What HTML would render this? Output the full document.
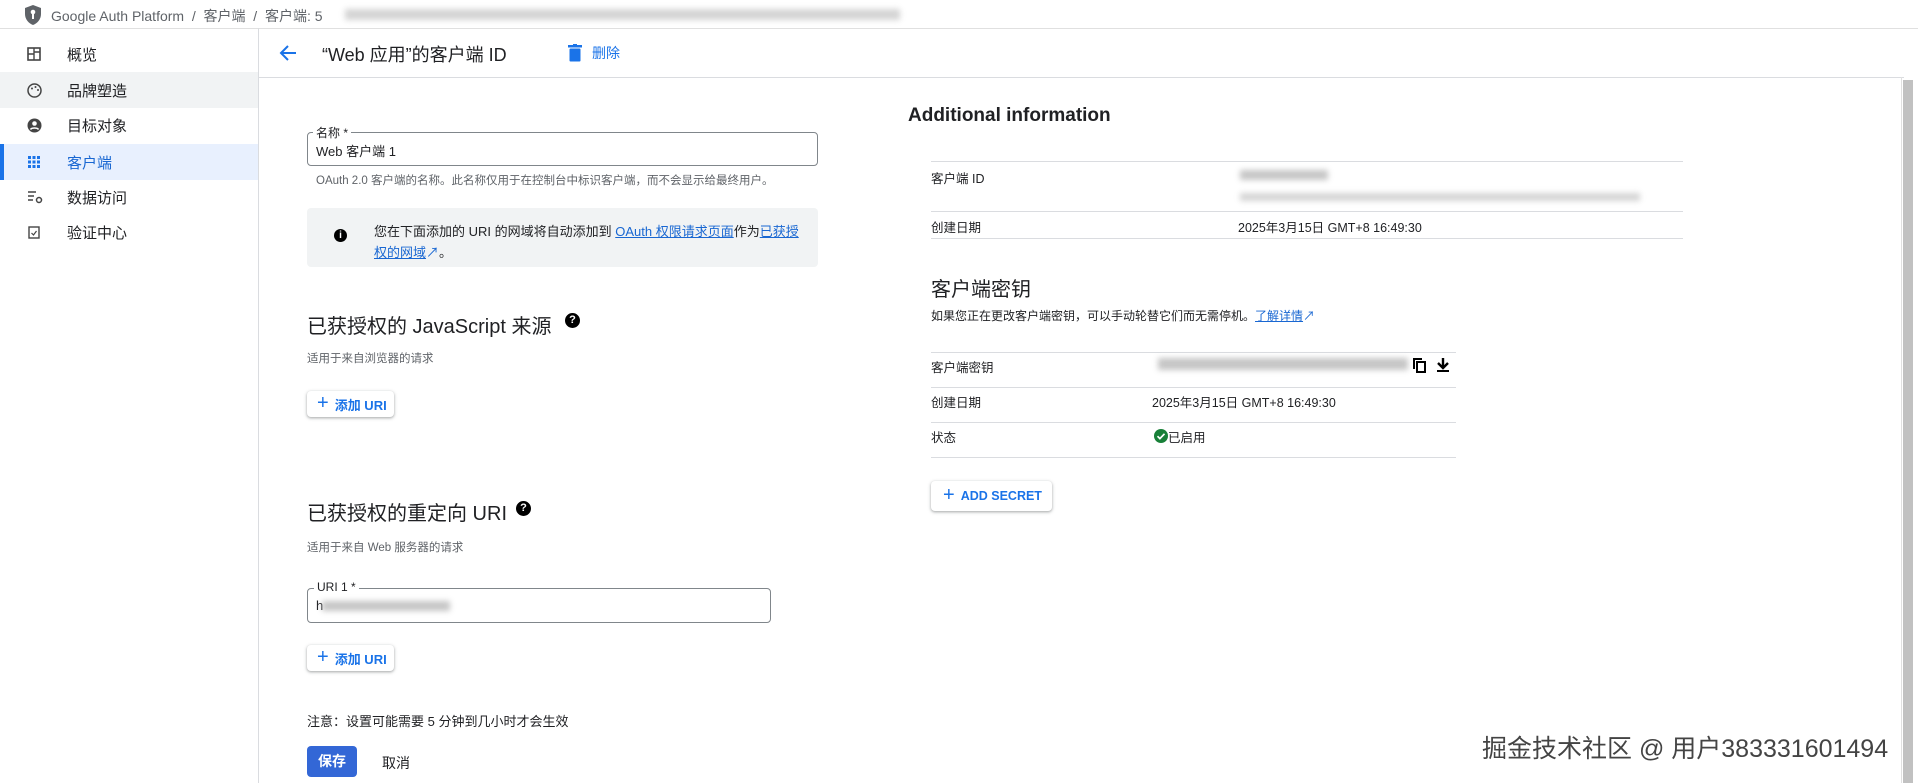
<!DOCTYPE html>
<html><head><meta charset="utf-8">
<style>
*{box-sizing:border-box;margin:0;padding:0}
body{width:1918px;height:783px;overflow:hidden;background:#fff;font-family:"Liberation Sans","Noto Sans CJK SC",sans-serif;color:#202124;position:relative}
.a{position:absolute;white-space:nowrap}
.blur{position:absolute;background:#b8b8b8;filter:blur(3px);opacity:.8}
.line{position:absolute;height:1px;background:#dadce0}
.nav{position:absolute;left:0;width:258px;height:36px;font-size:15px}
.nav span{position:absolute;left:67px;top:8px}
.nav svg{position:absolute;left:27px;top:11px}
.btn{position:absolute;border-radius:4px;box-shadow:0 1px 2px rgba(60,64,67,.3),0 1px 3px 1px rgba(60,64,67,.15);color:#1a73e8;font-size:13px;font-weight:bold;background:#fff;display:flex;align-items:center;padding-left:10px}
.btn b{font-size:20px;font-weight:normal;margin-right:6px;line-height:1;position:relative;top:-1px}
</style></head><body>
<!-- top bar -->
<div class="line" style="left:0;top:28px;width:1918px;background:#e0e0e0"></div>
<svg class="a" style="left:25px;top:5px" width="16" height="20" viewBox="0 0 16 20"><path d="M8 0L0 3v6c0 5 3.4 9.4 8 11 4.6-1.6 8-6 8-11V3z" fill="#5f6368"/><circle cx="8" cy="7" r="2.3" fill="#fff"/><rect x="7" y="8" width="2" height="6" fill="#fff"/></svg>
<div class="a" style="left:51px;top:6px;font-size:14px;color:#5f6368">Google Auth Platform &nbsp;/&nbsp; 客户端 &nbsp;/&nbsp; 客户端: 5</div>
<div class="blur" style="left:345px;top:9px;width:555px;height:11px;opacity:.6"></div>
<!-- sidebar -->
<div class="a" style="left:258px;top:28px;width:1px;height:755px;background:#dadce0"></div>
<div class="nav" style="top:36px"><svg width="14" height="14" viewBox="0 0 14 14"><rect x="1" y="1" width="12" height="12" fill="none" stroke="#444" stroke-width="1.6"/><path d="M7 1v12M1 7h6M7 5h6" stroke="#444" stroke-width="1.4"/></svg><span>概览</span></div>
<div class="nav" style="top:72px;background:#f1f3f4"><svg width="15" height="15" viewBox="0 0 15 15"><circle cx="7.5" cy="7.5" r="6.5" fill="none" stroke="#444" stroke-width="1.5"/><circle cx="5" cy="5.5" r="1" fill="#444"/><circle cx="8.5" cy="4" r="1" fill="#444"/><circle cx="11" cy="7" r="1" fill="#444"/></svg><span>品牌塑造</span></div>
<div class="nav" style="top:107px"><svg width="15" height="15" viewBox="0 0 15 15"><circle cx="7.5" cy="7.5" r="7" fill="#444"/><circle cx="7.5" cy="5.5" r="2.3" fill="#fff"/><path d="M3.5 11.5c1-2 7-2 8 0" stroke="#fff" stroke-width="1.6" fill="none"/></svg><span>目标对象</span></div>
<div class="nav" style="top:144px;background:#e8f0fe;color:#1967d2"><div style="position:absolute;left:0;top:0;width:4px;height:36px;background:#1a73e8"></div><svg width="14" height="14" viewBox="0 0 14 14" fill="#1a73e8"><rect x="1" y="1" width="3" height="3"/><rect x="5.5" y="1" width="3" height="3"/><rect x="10" y="1" width="3" height="3"/><rect x="1" y="5.5" width="3" height="3"/><rect x="5.5" y="5.5" width="3" height="3"/><rect x="10" y="5.5" width="3" height="3"/><rect x="1" y="10" width="3" height="3"/><rect x="5.5" y="10" width="3" height="3"/><rect x="10" y="10" width="3" height="3"/></svg><span>客户端</span></div>
<div class="nav" style="top:179px"><svg width="16" height="14" viewBox="0 0 16 14"><path d="M1 2h8M1 6h6M1 10h5" stroke="#444" stroke-width="1.5"/><circle cx="12" cy="10" r="2.5" fill="none" stroke="#444" stroke-width="1.5"/></svg><span>数据访问</span></div>
<div class="nav" style="top:214px"><svg width="14" height="14" viewBox="0 0 14 14"><rect x="2" y="2" width="10" height="11" fill="none" stroke="#444" stroke-width="1.4"/><path d="M4.5 8l2 2 3-4" stroke="#444" stroke-width="1.2" fill="none"/></svg><span>验证中心</span></div>
<!-- header -->
<svg class="a" style="left:279px;top:44px" width="18" height="18" viewBox="0 0 18 18"><path d="M17 9H3M9 2L2 9l7 7" stroke="#1a73e8" stroke-width="2" fill="none"/></svg>
<div class="a" style="left:322px;top:41px;font-size:18px">“Web 应用”的客户端 ID</div>
<svg class="a" style="left:568px;top:44px" width="14" height="18" viewBox="0 0 14 18"><rect x="0" y="1" width="14" height="2.5" fill="#1a73e8"/><rect x="5" y="0" width="4" height="2" fill="#1a73e8"/><rect x="1.5" y="4.5" width="11" height="13" rx="1" fill="#1a73e8"/></svg>
<div class="a" style="left:592px;top:43px;font-size:14px;color:#1a73e8">删除</div>
<div class="line" style="left:259px;top:77px;width:1645px"></div>
<div class="a" style="left:1903px;top:80px;width:10px;height:703px;background:#c1c1c1"></div>
<div class="a" style="left:1901px;top:77px;width:1px;height:706px;background:#e0e0e0"></div>
<!-- name field -->
<div class="a" style="left:307px;top:132px;width:511px;height:34px;border:1px solid #80868b;border-radius:4px"></div>
<div class="a" style="left:313px;top:124px;font-size:12px;background:#fff;padding:0 3px">名称 *</div>
<div class="a" style="left:316px;top:141px;font-size:13px">Web 客户端 1</div>
<div class="a" style="left:316px;top:172px;font-size:11.5px;color:#5f6368">OAuth 2.0 客户端的名称。此名称仅用于在控制台中标识客户端，而不会显示给最终用户。</div>
<!-- info -->
<div class="a" style="left:307px;top:208px;width:511px;height:59px;background:#f1f3f4;border-radius:4px"></div>
<div class="a" style="left:334px;top:229px;width:13px;height:13px;border-radius:50%;background:#000;color:#fff;font-size:10px;font-weight:bold;text-align:center;line-height:13px">i</div>
<div class="a" style="left:374px;top:221px;font-size:13px;line-height:21px">您在下面添加的 URI 的网域将自动添加到 <span style="color:#1967d2;text-decoration:underline">OAuth 权限请求页面</span>作为<span style="color:#1967d2;text-decoration:underline">已获授</span><br><span style="color:#1967d2;text-decoration:underline">权的网域</span><span style="color:#1967d2">↗</span>。</div>
<!-- JS origins -->
<div class="a" style="left:307px;top:310px;font-size:20px">已获授权的 JavaScript 来源</div>
<div class="a" style="left:565px;top:313px;width:15px;height:15px;border-radius:50%;background:#000;color:#fff;font-size:11px;font-weight:bold;text-align:center;line-height:15px">?</div>
<div class="a" style="left:307px;top:350px;font-size:11.5px;color:#5f6368">适用于来自浏览器的请求</div>
<div class="btn" style="left:307px;top:391px;width:87px;height:26px"><b>+</b>添加 URI</div>
<!-- redirect -->
<div class="a" style="left:307px;top:497px;font-size:20px">已获授权的重定向 URI</div>
<div class="a" style="left:516px;top:501px;width:15px;height:15px;border-radius:50%;background:#000;color:#fff;font-size:11px;font-weight:bold;text-align:center;line-height:15px">?</div>
<div class="a" style="left:307px;top:539px;font-size:11.5px;color:#5f6368">适用于来自 Web 服务器的请求</div>
<div class="a" style="left:307px;top:588px;width:464px;height:35px;border:1px solid #80868b;border-radius:4px"></div>
<div class="a" style="left:314px;top:580px;font-size:12px;background:#fff;padding:0 3px">URI 1 *</div>
<div class="a" style="left:316px;top:598px;font-size:13px">h</div>
<div class="blur" style="left:322px;top:601px;width:128px;height:10px"></div>
<div class="btn" style="left:307px;top:645px;width:87px;height:26px"><b>+</b>添加 URI</div>
<div class="a" style="left:307px;top:711px;font-size:13px">注意：设置可能需要 5 分钟到几小时才会生效</div>
<div class="a" style="left:307px;top:746px;width:50px;height:31px;background:#3367d6;border-radius:4px;color:#fff;font-size:14px;font-weight:bold;text-align:center;line-height:31px">保存</div>
<div class="a" style="left:382px;top:753px;font-size:14px">取消</div>
<!-- right -->
<div class="a" style="left:908px;top:105px;font-size:19px;font-weight:bold">Additional information</div>
<div class="line" style="left:931px;top:161px;width:752px"></div>
<div class="line" style="left:931px;top:211px;width:752px"></div>
<div class="line" style="left:931px;top:238px;width:752px"></div>
<div class="a" style="left:931px;top:168px;font-size:12.5px">客户端 ID</div>
<div class="blur" style="left:1240px;top:170px;width:88px;height:10px"></div>
<div class="blur" style="left:1240px;top:193px;width:400px;height:8px;opacity:.6"></div>
<div class="a" style="left:931px;top:217px;font-size:12.5px">创建日期</div>
<div class="a" style="left:1238px;top:217px;font-size:12.5px">2025年3月15日 GMT+8 16:49:30</div>
<div class="a" style="left:931px;top:273px;font-size:20px">客户端密钥</div>
<div class="a" style="left:931px;top:307px;font-size:12px">如果您正在更改客户端密钥，可以手动轮替它们而无需停机。<span style="color:#1967d2;text-decoration:underline">了解详情</span><span style="color:#1967d2">↗</span></div>
<div class="line" style="left:931px;top:352px;width:525px"></div>
<div class="line" style="left:931px;top:387px;width:525px"></div>
<div class="line" style="left:931px;top:422px;width:525px"></div>
<div class="line" style="left:931px;top:457px;width:525px"></div>
<div class="a" style="left:931px;top:357px;font-size:12.5px">客户端密钥</div>
<div class="blur" style="left:1158px;top:358px;width:250px;height:12px"></div>
<svg class="a" style="left:1413px;top:358px" width="14" height="15" viewBox="0 0 14 15"><rect x="4" y="4" width="8" height="10" stroke="#000" stroke-width="2" fill="none"/><path d="M1 11V1h8" stroke="#000" stroke-width="2" fill="none"/></svg>
<svg class="a" style="left:1436px;top:357px" width="14" height="16" viewBox="0 0 14 16"><path d="M7 1v9M2 6l5 5 5-5" stroke="#000" stroke-width="2.4" fill="none"/><rect x="1" y="13" width="12" height="2" fill="#000"/></svg>
<div class="a" style="left:931px;top:392px;font-size:12.5px">创建日期</div>
<div class="a" style="left:1152px;top:392px;font-size:12.5px">2025年3月15日 GMT+8 16:49:30</div>
<div class="a" style="left:931px;top:427px;font-size:12.5px">状态</div>
<svg class="a" style="left:1154px;top:429px" width="14" height="14" viewBox="0 0 14 14"><circle cx="7" cy="7" r="7" fill="#188038"/><path d="M3.5 7.2l2.4 2.4 4.6-4.8" stroke="#fff" stroke-width="1.7" fill="none"/></svg>
<div class="a" style="left:1168px;top:427px;font-size:12.5px">已启用</div>
<div class="btn" style="left:931px;top:481px;width:121px;height:30px;padding-left:12px;font-size:12.5px"><b>+</b>ADD SECRET</div>
<!-- watermark -->
<div class="a" style="left:1482px;top:729px;font-size:25px;color:#444;text-shadow:0 0 2px #fff,1px 1px 1px #fff">掘金技术社区 @ 用户383331601494</div>
</body></html>
